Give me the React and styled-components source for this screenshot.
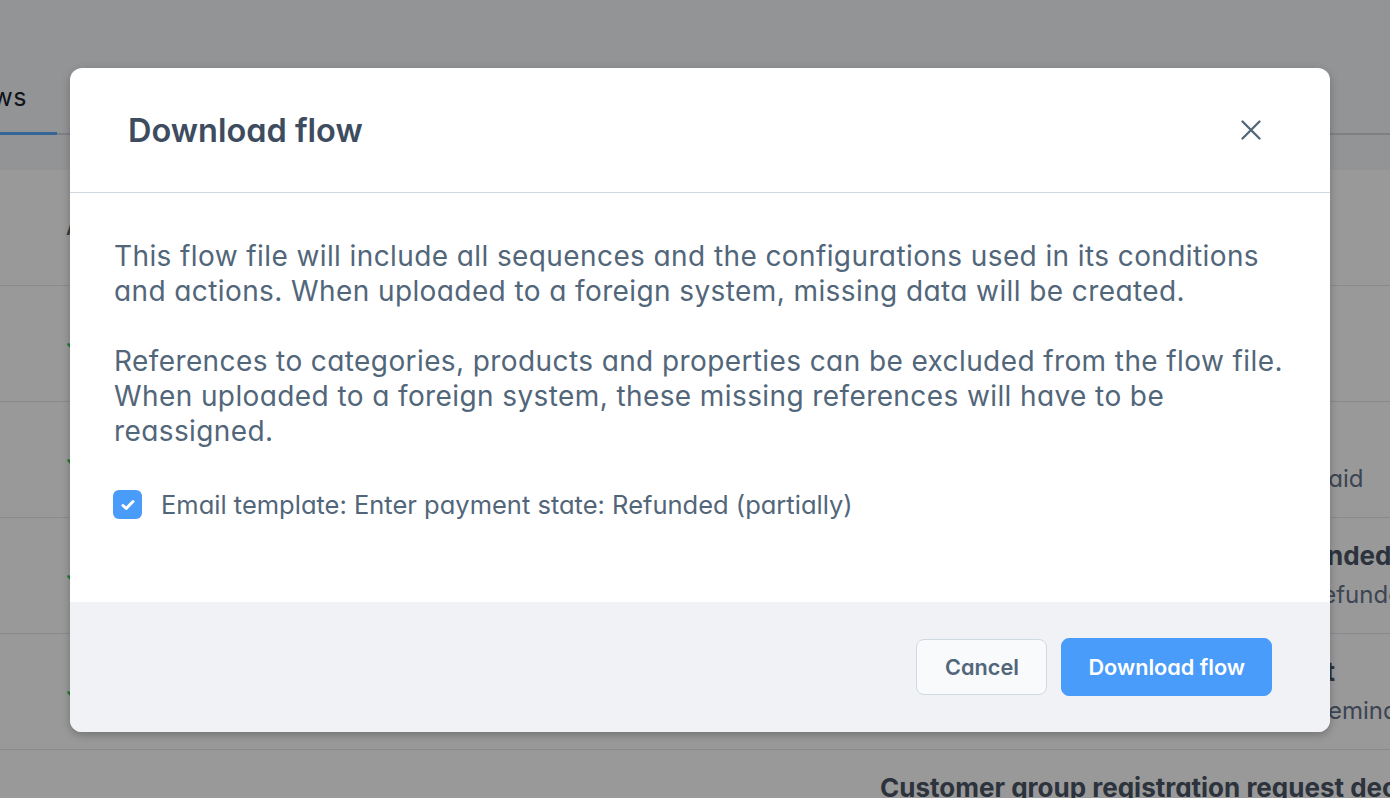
import React from "react";
import styled, { createGlobalStyle } from "styled-components";

const Global = createGlobalStyle`
  html, body { margin: 0; padding: 0; }
  body {
    font-family: Inter, "Noto Sans", "Liberation Sans", sans-serif;
    font-feature-settings: "cv11" 1;
    overflow: hidden;
    background: #ffffff;
  }
`;

const Page = styled.div`
  width: 1390px;
  height: 798px;
  overflow: hidden;
  position: relative;
  background: #ffffff;
`;

const TopArea = styled.div`
  height: 170px;
  background: #f5f7fa;
  display: flex;
  flex-direction: column;
`;

const TabBar = styled.div`
  margin-top: 76px;
  height: 59px;
  display: flex;
  border-bottom: 2px solid #d4d6dd;
  box-sizing: border-box;
`;

const Tab = styled.div`
  margin-left: -42px;
  width: 99px;
  height: 59px;
  box-sizing: border-box;
  font-size: 25px;
  color: #1b232d;
  display: flex;
  align-items: center;
  justify-content: flex-end;
  padding-right: 30px;
  padding-bottom: 14px;
  border-bottom: 3px solid #5aa9ff;
  margin-bottom: -2px;
  letter-spacing: 0.5px;
`;

const TableHeader = styled.div`
  height: 115px;
  border-bottom: 1px solid #e6e7ed;
  display: flex;
  align-items: center;
  padding-left: 66px;
  font-size: 20px;
  font-weight: 600;
  color: #52667a;
`;

const Row = styled.div`
  height: 116px;
  box-sizing: border-box;
  border-bottom: 1px solid #e6e7ed;
  display: grid;
  grid-template-columns: 816px 1fr;
  padding-left: 64px;
`;

const Check = styled.span`
  color: #37d046;
  display: flex;
  align-items: center;
`;

const Cell = styled.div`
  display: flex;
  flex-direction: column;
  gap: 9px;
  padding-top: 23px;
  white-space: nowrap;
  overflow: hidden;
`;

const RowTitle = styled.div`
  font-size: 26px;
  line-height: 30px;
  font-weight: 700;
  color: #4a5566;
`;

const RowSub = styled.div`
  font-size: 24px;
  line-height: 30px;
  color: #67738a;
`;

const Backdrop = styled.div`
  position: absolute;
  inset: 0;
  background: rgba(0, 0, 0, 0.4);
  padding: 68px 0 0 70px;
  box-sizing: border-box;
`;

const Modal = styled.div`
  width: 1260px;
  height: 664px;
  background: #ffffff;
  border-radius: 12px;
  box-shadow: 0 3px 8px rgba(0, 0, 0, 0.25);
  display: flex;
  flex-direction: column;
  overflow: hidden;
`;

const Header = styled.div`
  height: 125px;
  box-sizing: border-box;
  border-bottom: 1px solid #d1d9e0;
  display: flex;
  align-items: center;
  justify-content: space-between;
  padding: 0 67px 0 58px;
`;

const Title = styled.h2`
  margin: 0;
  font-size: 32.5px;
  font-weight: 600;
  color: #3d4c5e;
`;

const Close = styled.button`
  border: 0;
  background: none;
  padding: 0;
  width: 24px;
  height: 24px;
  display: flex;
  align-items: center;
  justify-content: center;
  color: #52667a;
  cursor: pointer;
`;

const Body = styled.div`
  flex: 1;
  padding: 46px 44px 0 44px;
  display: flex;
  flex-direction: column;
`;

const Para = styled.p`
  margin: 0 0 34.5px 0;
  font-size: 28px;
  line-height: 35px;
  letter-spacing: 0.4px;
  color: #52667a;
`;

const CheckRow = styled.label`
  display: flex;
  align-items: center;
  gap: 19px;
  margin-top: 6px;
  margin-left: -1px;
`;

const Box = styled.span`
  width: 29px;
  height: 29px;
  border-radius: 6px;
  background: #4a9cfb;
  display: flex;
  align-items: center;
  justify-content: center;
  color: #fff;
`;

const CheckLabel = styled.span`
  font-size: 25.5px;
  color: #52667a;
`;

const Footer = styled.div`
  height: 130px;
  background: #f0f2f5;
  display: flex;
  align-items: center;
  justify-content: flex-end;
  gap: 14px;
  padding: 0 58px;
`;

const Button = styled.button`
  height: ${(p) => (p.$primary ? "58px" : "56px")};
  padding: 0 ${(p) => (p.$primary ? "26px" : "27.5px")};
  border-radius: 8px;
  font-family: inherit;
  font-feature-settings: "cv11" 1;
  font-size: 21.7px;
  font-weight: 600;
  cursor: pointer;
  border: 1px solid ${(p) => (p.$primary ? "#4a9cfb" : "#d1d9e0")};
  background: ${(p) => (p.$primary ? "#4a9cfb" : "#f9fafb")};
  color: ${(p) => (p.$primary ? "#ffffff" : "#52667a")};
`;

const rows = [
  { title: "Checkout order placed", sub: "Order placed" },
  { title: "Order enters payment state: Paid", sub: "Sends an email when an order is fully paid" },
  { title: "Order enters a payment state: Refunded", sub: "Sends an email when an order is fully refunded" },
  { title: "Payment reminder to customer sent", sub: "Sends out an e-mail with the payment reminder" },
  { title: "Customer group registration request declined", sub: "" },
];

const CheckIcon = () => (
  <svg width="22" height="22" viewBox="0 0 24 24" fill="none" stroke="currentColor" strokeWidth="3" strokeLinecap="round" strokeLinejoin="round">
    <path d="M5 12.5l4.5 4.5L19 7" />
  </svg>
);

export default function App() {
  return (
    <Page>
      <Global />
      <TopArea>
        <TabBar>
          <Tab>Flows</Tab>
        </TabBar>
      </TopArea>
      <TableHeader>Active</TableHeader>
      {rows.map((r, i) => (
        <Row key={i}>
          {r.sub ? (
            <Check>
              <CheckIcon />
            </Check>
          ) : (
            <span />
          )}
          <Cell>
            <RowTitle>{r.title}</RowTitle>
            {r.sub && <RowSub>{r.sub}</RowSub>}
          </Cell>
        </Row>
      ))}
      <Backdrop>
        <Modal role="dialog">
          <Header>
            <Title>Download flow</Title>
            <Close aria-label="Close">
              <svg width="20" height="20" viewBox="0 0 20 20" fill="none" stroke="currentColor" strokeWidth="2.3" strokeLinecap="round">
                <path d="M1.5 1.5l17 17M18.5 1.5l-17 17" />
              </svg>
            </Close>
          </Header>
          <Body>
            <Para>
              This flow file will include all sequences and the configurations used in its conditions and actions. When
              uploaded to a foreign system, missing data will be created.
            </Para>
            <Para>
              References to categories, products and properties can be excluded from the flow file. When uploaded to a
              foreign system, these missing references will have to be reassigned.
            </Para>
            <CheckRow>
              <Box>
                <svg width="18" height="18" viewBox="0 0 18 18" fill="none" stroke="currentColor" strokeWidth="3" strokeLinecap="round" strokeLinejoin="round">
                  <path d="M4 9.5l3.2 3L14 5.5" />
                </svg>
              </Box>
              <CheckLabel>Email template: Enter payment state: Refunded (partially)</CheckLabel>
            </CheckRow>
          </Body>
          <Footer>
            <Button>Cancel</Button>
            <Button $primary>Download flow</Button>
          </Footer>
        </Modal>
      </Backdrop>
    </Page>
  );
}
